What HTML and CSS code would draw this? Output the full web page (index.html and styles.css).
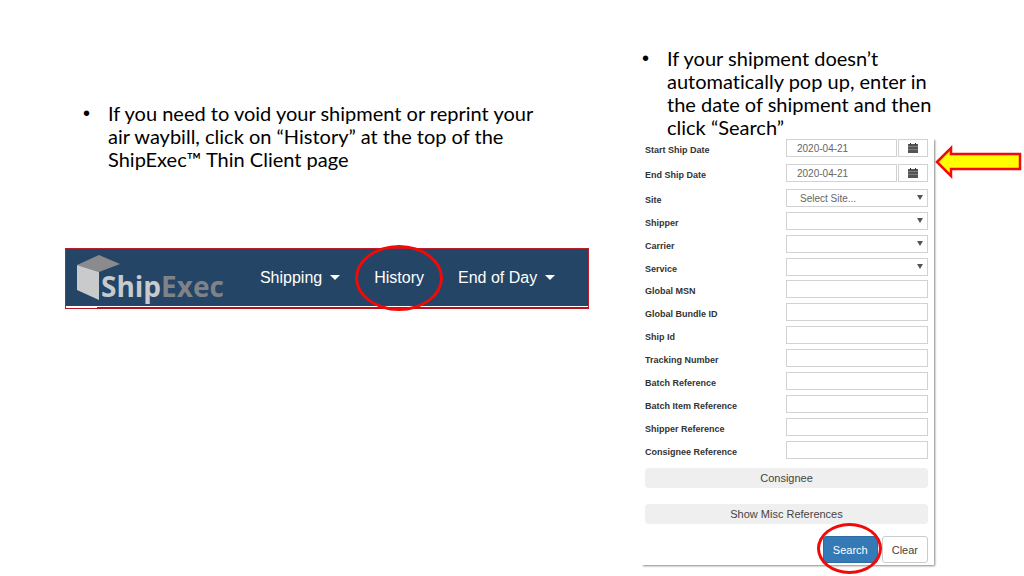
FILE: index.html
```html
<!DOCTYPE html>
<html lang="en">
<head>
  <meta charset="UTF-8">
  <meta name="viewport" content="width=device-width, initial-scale=1.0">
  <title>ShipExec Thin Client - History</title>
  <link rel="stylesheet" href="styles.css">
</head>
<body>
  <main class="slide">
    <section class="left">
      <ul class="notes">
        <li>If you need to void your shipment or reprint your air waybill, click on “History” at the top of the ShipExec™ Thin Client page</li>
      </ul>

      <nav class="navbar">
        <a class="brand" href="#">
          <svg class="cube" viewBox="0 0 44 46" aria-hidden="true">
            <polygon points="0,10 22,0 43,9 22,17" fill="#8b8b8d" />
            <polygon points="0,10 22,17 22,45 0,35" fill="#c9cacc" />
          </svg>
          <span class="brand-name">Ship<span class="brand-exec">Exec</span></span>
        </a>
        <div class="menu">
          <a class="menu-link" href="#">Shipping <span class="caret"></span></a>
          <a class="menu-link circled" href="#">History<span class="circle"></span></a>
          <a class="menu-link" href="#">End of Day <span class="caret"></span></a>
        </div>
      </nav>
    </section>

    <section class="right">
      <ul class="notes">
        <li>If your shipment doesn’t automatically pop up, enter in the date of shipment and then click “Search”</li>
      </ul>

      <form class="panel">
        <div class="fields dates">
          <div class="field">
            <label for="start-date">Start Ship Date</label>
            <div class="date-group">
              <input type="text" id="start-date" value="2020-04-21">
              <button type="button" class="calendar" aria-label="Pick start date">
                <svg viewBox="0 0 10 10"><path d="M0 1h10v9H0z" fill="#555" /><path d="M2 0h1v2H2zM7 0h1v2H7z" fill="#333" /><path d="M0 3.5h10M0 6.5h10" stroke="#999" stroke-width=".6" /></svg>
              </button>
            </div>
          </div>
          <div class="field">
            <label for="end-date">End Ship Date</label>
            <div class="date-group">
              <input type="text" id="end-date" value="2020-04-21">
              <button type="button" class="calendar" aria-label="Pick end date">
                <svg viewBox="0 0 10 10"><path d="M0 1h10v9H0z" fill="#555" /><path d="M2 0h1v2H2zM7 0h1v2H7z" fill="#333" /><path d="M0 3.5h10M0 6.5h10" stroke="#999" stroke-width=".6" /></svg>
              </button>
            </div>
          </div>
        </div>

        <div class="fields selects">
          <div class="field">
            <label for="site">Site</label>
            <div class="select"><select id="site"><option>Select Site...</option></select></div>
          </div>
          <div class="field">
            <label for="shipper">Shipper</label>
            <div class="select"><select id="shipper"><option></option></select></div>
          </div>
          <div class="field">
            <label for="carrier">Carrier</label>
            <div class="select"><select id="carrier"><option></option></select></div>
          </div>
          <div class="field">
            <label for="service">Service</label>
            <div class="select"><select id="service"><option></option></select></div>
          </div>
        </div>

        <div class="fields">
          <div class="field"><label for="msn">Global MSN</label><input type="text" id="msn"></div>
          <div class="field"><label for="bundle">Global Bundle ID</label><input type="text" id="bundle"></div>
          <div class="field"><label for="ship-id">Ship Id</label><input type="text" id="ship-id"></div>
          <div class="field"><label for="tracking">Tracking Number</label><input type="text" id="tracking"></div>
          <div class="field"><label for="batch">Batch Reference</label><input type="text" id="batch"></div>
          <div class="field"><label for="batch-item">Batch Item Reference</label><input type="text" id="batch-item"></div>
          <div class="field"><label for="shipper-ref">Shipper Reference</label><input type="text" id="shipper-ref"></div>
          <div class="field"><label for="consignee-ref">Consignee Reference</label><input type="text" id="consignee-ref"></div>
        </div>

        <div class="sections">
          <button type="button" class="section-bar">Consignee</button>
          <button type="button" class="section-bar">Show Misc References</button>
        </div>

        <div class="actions">
          <div class="circled">
            <button type="submit" class="btn btn-primary">Search</button>
            <span class="circle"></span>
          </div>
          <button type="reset" class="btn">Clear</button>
        </div>

        <!-- arrow pointing at the date fields -->
        <svg class="arrow" viewBox="0 0 88 36" aria-hidden="true">
          <polygon points="3,18 17,4 17,10 86,10 86,25 17,25 17,32" fill="#ffff00" stroke="#f00a0a" stroke-width="2.5" />
        </svg>
      </form>
    </section>
  </main>
</body>
</html>
```
FILE: styles.css
```css
* {
  box-sizing: border-box;
}

body {
  margin: 0;
  background-color: #ffffff;
  color: #000000;
  font-family: "Liberation Sans", Arial, sans-serif;
}

.slide {
  display: grid;
  grid-template-columns: 1fr 292px;
  align-items: start;
  column-gap: 53px;
  min-height: 100vh;
  padding: 47px 90px 8px 65px;
}

.left {
  padding-top: 55px;
}

/* Bullet text */
.notes {
  margin: 0;
  padding: 0;
  list-style: none;
  font-family: Lato, sans-serif;
  font-size: 20px;
  font-variant-ligatures: none;
  line-height: 23px;
}

.notes li {
  position: relative;
  padding-left: 25px;
}

.notes li::before {
  content: "•";
  position: absolute;
  left: 0;
  font-family: "Liberation Sans", Arial, sans-serif;
}

.left .notes {
  padding: 0 50px 0 18px;
}

/* Navigation bar */
.navbar {
  position: relative;
  display: flex;
  align-items: center;
  gap: 36px;
  height: 61px;
  margin-top: 77px;
  padding: 0 0 1px 11px;
  background-color: #244566;
  border: 1px solid #b5202a;
  border-bottom: 2px solid #b5141c;
  box-shadow: inset 0 -1px 0 #ffffff;
}

/* white strip that runs over the start of the bottom border */
.navbar::after {
  content: "";
  position: absolute;
  bottom: -1px;
  left: 0;
  width: 31px;
  height: 2px;
  background-color: #ffffff;
}

.brand {
  display: flex;
  align-items: center;
  text-decoration: none;
}

.cube {
  width: 44px;
  height: 46px;
}

.brand-name {
  margin: 16px 0 0 -20px;
  font-family: "Open Sans", sans-serif;
  font-size: 28px;
  font-weight: bold;
  line-height: 32px;
  color: #c9cacc;
}

.brand-exec {
  color: #7f8287;
}

.menu {
  display: flex;
  gap: 34px;
}

.menu-link {
  display: flex;
  align-items: center;
  gap: 8px;
  color: #ffffff;
  font-size: 16px;
  line-height: 20px;
  text-decoration: none;
}

.caret {
  border: 5px solid transparent;
  border-top-color: #ffffff;
  border-bottom: 0;
}

/* Red rings drawn round an item */
.circled {
  position: relative;
}

.circle {
  position: absolute;
  inset: -23px -19px;
  border: 3px solid #f00a0a;
  border-radius: 50%;
  pointer-events: none;
}

.actions .circle {
  inset: -13px -4px -11px -6px;
}

/* Search panel */
.panel {
  position: relative;
  padding: 0 6px 2px 3px;
  box-shadow: 1px 1px 2px #888888;
  clip-path: inset(0 -90px -20px 0);
}

.fields {
  display: grid;
  gap: 5px;
  margin-bottom: 4px;
}

.dates {
  gap: 7px;
  margin-bottom: 7px;
}

.field {
  display: grid;
  grid-template-columns: 141px 1fr;
}

.field label {
  padding-top: 5px;
  color: #333333;
  font-size: 9px;
  font-weight: bold;
  line-height: 13px;
}

.field input,
.field select,
.calendar {
  display: block;
  width: 100%;
  min-width: 0;
  height: 18px;
  padding: 0 10px;
  border: 1px solid #d2d2d2;
  border-radius: 0;
  background-color: #ffffff;
  color: #666666;
  font-family: inherit;
  font-size: 10px;
}

.date-group {
  display: grid;
  grid-template-columns: 1fr 30px;
  gap: 1px;
}

.field .calendar {
  display: flex;
  align-items: center;
  justify-content: center;
  padding: 0;
}

.calendar svg {
  width: 10px;
  height: 10px;
}

.select {
  position: relative;
}

.field select {
  appearance: none;
  padding-left: 13px;
}

.select::after {
  content: "";
  position: absolute;
  top: 6px;
  right: 5px;
  border: 3px solid transparent;
  border-top: 5px solid #555555;
  border-bottom: 0;
}

.sections {
  display: grid;
  gap: 16px;
  margin-top: 9px;
}

.section-bar {
  height: 20px;
  padding: 0;
  border: 0;
  border-radius: 4px;
  background-color: #efefef;
  color: #444444;
  font-family: inherit;
  font-size: 11px;
}

.actions {
  display: flex;
  justify-content: flex-end;
  gap: 4px;
  margin-top: 12px;
}

.btn {
  height: 27px;
  padding: 0 9px;
  border: 1px solid #cccccc;
  border-radius: 3px;
  background-color: #ffffff;
  color: #444444;
  font-family: inherit;
  font-size: 11px;
}

.btn-primary {
  border-color: #2e6da4;
  background-color: #337ab7;
  color: #ffffff;
}

.arrow {
  position: absolute;
  top: 5px;
  left: 292px;
  width: 88px;
  height: 36px;
}
```
